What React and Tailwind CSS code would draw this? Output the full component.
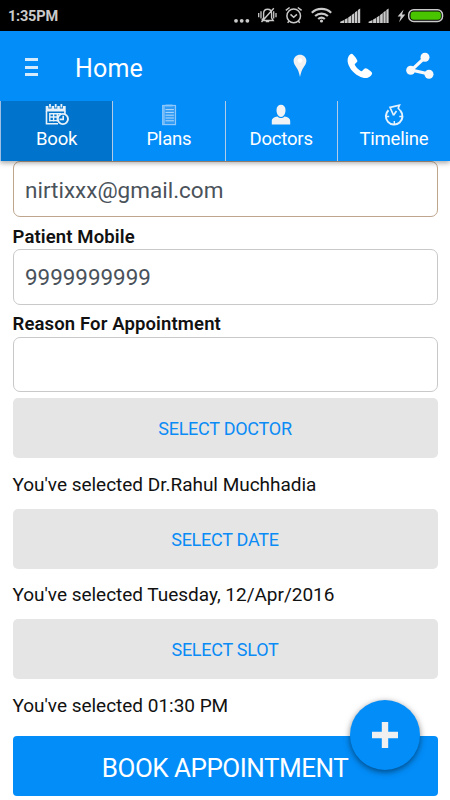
const tabs = [
  { label: "Book", icon: BookIcon },
  { label: "Plans", icon: PlansIcon },
  { label: "Doctors", icon: DoctorIcon },
  { label: "Timeline", icon: TimelineIcon },
];

function StatusIcons() {
  return (
    <svg width="225" height="31" viewBox="0 0 225 31" fill="none" stroke="#cacaca">
      {/* More */}
      <g fill="#cacaca" stroke="none">
        <circle cx="11" cy="20.8" r="1.9" />
        <circle cx="16.7" cy="20.8" r="1.9" />
        <circle cx="22.4" cy="20.8" r="1.9" />
      </g>

      {/* Muted bell */}
      <path d="M36.8 20.5h11.4l-1.6-2.6v-4.3c0-2.4-1.6-4.3-4-4.3s-4 1.9-4 4.3v4.3l-1.8 2.6M40.8 21.5h3.4M36.5 22L48.8 8.3" strokeWidth="1.4" />
      <path d="M33.7 13v4.2M36 11.3v7.2M48.7 11.3v7.2M51 13v4.2" strokeWidth="1.3" />

      {/* Alarm */}
      <circle cx="68.7" cy="15.9" r="6.8" strokeWidth="1.5" />
      <path d="M65.5 14.4l3.2 2.8 3.2-2.8M60.8 10.4l3.8-2.9M76.6 10.4l-3.8-2.9M64.3 21l-1.7 1.8M73.1 21l1.7 1.8" strokeWidth="1.5" />

      {/* Wifi */}
      <path d="M86.8 12.7c5.5-5 13.9-5 19.4 0M90.1 16c3.7-3.3 9.1-3.3 12.8 0M93.2 19c1.9-1.7 4.7-1.7 6.6 0" strokeWidth="2.2" />
      <circle cx="96.5" cy="21" r="1.6" fill="#cacaca" stroke="none" />

      {/* Signal strength */}
      <g fill="#cacaca" stroke="none">
        <path d="M115.2 23v-1.2l3.9-1.9V23zM119.7 23v-3.6l2.9-1.4v5zM123.2 23v-5.6l2.9-1.8V23zM126.7 23v-8l2.7-2v10zM130 23V12.3l2.3-1.5V23zM132.9 23V10l2.3-1.4V23z" />
        <path d="M143.6 23v-1.2l3.9-1.9V23zM148.1 23v-3.6l2.9-1.4v5zM151.6 23v-5.6l2.9-1.8V23zM155.1 23v-8l2.7-2v10zM158.4 23V12.3l2.3-1.5V23zM161.3 23V10l2.3-1.4V23z" />
        <path d="M178.6 9.4l-6 7.2h3.2l-1.7 5.6 6.2-7.6h-3.3z" />
      </g>

      {/* Battery */}
      <rect x="183.7" y="9.7" width="33.8" height="11.8" rx="5" strokeWidth="1.5" />
      <rect x="185.5" y="11.5" width="30.4" height="8.2" rx="3.2" fill="#49c500" stroke="none" />
    </svg>
  );
}

function PinIcon() {
  return (
    <svg width="14" height="24" viewBox="0 0 14 24">
      <path d="M7 .7C3.4.7.6 3.4.6 6.8c0 3.6 2.8 6 4.3 9.1.9 1.9 1.5 4.4 2.1 7.1.6-2.7 1.2-5.2 2.1-7.1 1.5-3.1 4.3-5.5 4.3-9.1C13.4 3.4 10.6.7 7 .7z" fill="#f1f1f1" />
      <circle cx="7" cy="6.5" r="2.3" fill="#fff" />
    </svg>
  );
}

function PhoneIcon() {
  return (
    <svg width="26" height="26" viewBox="0 0 26 26" fill="#fff">
      <path d="M1.2 4.2C2 2 3.5.8 4.8.8c1.2.2 5.6 5.7 5.6 7.1 0 1-1 1.7-2.3 2.8-.5.5-.5 1-.1 1.6 1.4 2.3 3.3 4.2 5.7 5.6.7.4 1.2.3 1.7-.2 1.3-1.5 2.1-2.5 3.3-2.5 1.5.1 6.3 3.4 6.4 4.7.1 1.3-1 2.7-2.5 3.9-2.6 2-6.6 1.5-10.8-.8C5.5 19.9 1.1 13.5.6 8.3c-.1-1.6.1-3 .6-4.1z" />
    </svg>
  );
}

function ShareIcon() {
  return (
    <svg width="28" height="28" viewBox="0 0 28 28" fill="#f8f8f8" stroke="#f8f8f8">
      <path d="M19 5.5L5.5 18 23 22" fill="none" strokeWidth="3.2" />
      <circle cx="19" cy="5.3" r="4.5" stroke="none" />
      <circle cx="4.7" cy="18.2" r="4.5" stroke="none" />
      <circle cx="23" cy="22.3" r="4.5" stroke="none" />
    </svg>
  );
}

function BookIcon() {
  return (
    <svg width="24" height="22" viewBox="0 0 24 22" fill="none" stroke="#e8f1f8">
      <path d="M.7 2h20v5.5h-20z" fill="#e8f1f8" stroke="none" />
      <path d="M5 .4v4M10.7.4v4M16.4.4v4" stroke="#0074cd" strokeWidth="3.2" />
      <path d="M5 0v3.6M10.7 0v3.6M16.4 0v3.6" strokeWidth="1.8" />
      <path d="M1.5 7v12.8h11.5M19.9 7v3" strokeWidth="1.6" />
      <path d="M4.3 9.7h12M4.3 13h8.5M4.3 16.6h8.5M4.8 9v8.4M8.6 9v8.4M12.3 9v8.4" strokeWidth="1.4" />
      <circle cx="17.9" cy="15" r="5.1" fill="#0074cd" strokeWidth="1.9" />
      <path d="M18.2 11.7v3.7h-3.7" strokeWidth="1.6" />
    </svg>
  );
}

function PlansIcon() {
  return (
    <svg width="16" height="22" viewBox="0 0 16 22" fill="none" stroke="#8fc8f8">
      <rect x="1.7" y="1.5" width="12.8" height="19.1" strokeWidth="1.2" fill="#2f9cf7" />
      <path d="M3 2v18" strokeWidth="1.2" />
      <path d="M4.5 1.5h7" strokeWidth="1.8" />
      <path d="M4.5 5.6h8.4M4.5 8.4h8.4M4.5 11.2h8.4M4.5 14h8.4M4.5 16.8h8.4" stroke="#b5dafa" strokeWidth="1" />
    </svg>
  );
}

function DoctorIcon() {
  return (
    <svg width="20" height="22" viewBox="0 0 20 22" fill="#f0f2f4">
      <path d="M.8 20.5v-3.2c0-2.8 2.2-4.1 5.8-4.7 1.8 2 5 2 6.8 0 3.6.6 5.8 1.9 5.8 4.7v3.2z" />
      <path d="M10 .8c2.7 0 4.5 2 4.5 5.2 0 3.8-2 7-4.5 7s-4.5-3.2-4.5-7C5.5 2.8 7.3.8 10 .8z" />
    </svg>
  );
}

function TimelineIcon() {
  return (
    <svg width="20" height="22" viewBox="0 0 20 22" fill="none" stroke="#e6f2fc">
      <path d="M4.5 6.2A8.3 8.3 0 1 0 16.5 6.9" strokeWidth="2" />
      <path d="M9.6 11.3L6 3.4 15.5 1.2 14.2 4.2 16.6 7" strokeWidth="1.6" />
      <path d="M9.5 11.3l3-4.3" strokeWidth="1.7" />
      <path d="M2.5 12.5h2.7M15.3 12.5H18M10.3 17v3" strokeWidth="1.4" />
    </svg>
  );
}

function Field({ label, value }) {
  return (
    <div>
      <div className="flex h-8 items-center pt-[9px] text-[18.5px] font-semibold tracking-[0.13px] text-[#111]">{label}</div>
      <div className="flex h-[55.5px] items-center rounded-[7px] border border-[#c9c9c9] px-[11.5px] pt-[2px] text-[22.4px] text-[#4a525b]">
        {value}
      </div>
    </div>
  );
}

function Picker({ action, selected }) {
  return (
    <div className="h-[110.7px]">
      <div className="flex h-[60px] items-center justify-center rounded-[5px] bg-[#e5e5e5] pt-px text-[18px] tracking-[-0.25px] text-[#0a8bf5]">
        {action}
      </div>
      <div className="flex h-[50px] items-center pt-[4px] text-[19px] tracking-[-0.02px] text-[#111]">{selected}</div>
    </div>
  );
}

export default function App() {
  return (
    <div className="flex h-[800px] w-[450px] flex-col overflow-hidden bg-white font-[Roboto,sans-serif]">
      {/* Status bar */}
      <div className="flex h-[31px] shrink-0 items-center justify-between bg-black">
        <span className="pl-2 pt-0.5 text-[14.5px] font-bold tracking-[-0.2px] text-[#cacaca]">1:35PM</span>
        <StatusIcons />
      </div>

      <header className="relative z-10 shrink-0 bg-[#038df9] text-white shadow-[0_2px_5px_rgba(0,0,0,0.35)]">
        {/* App bar */}
        <div className="flex h-[70px] items-center pl-[25px]">
          <div className="mt-[2px] flex w-[13px] flex-col gap-[4.5px]">
            <span className="h-[3px] bg-[#d5ebfc]" />
            <span className="h-[3px] bg-[#d5ebfc]" />
            <span className="h-[3px] bg-[#d5ebfc]" />
          </div>
          <h1 className="w-[255px] pl-[37px] pt-[4px] text-[25px] leading-none tracking-[0.2px]">Home</h1>
          <PinIcon />
          <div className="ml-[40px]"><PhoneIcon /></div>
          <div className="ml-[33px]"><ShareIcon /></div>
        </div>

        {/* Tabs */}
        <nav className="grid h-[60px] grid-cols-4 border-l border-[#9dbfe6]">
          {tabs.map(({ label, icon: Icon }, i) => (
            <div
              key={label}
              className={`flex flex-col items-center pt-[3px] ${i === 0 ? "bg-[#0074cd]" : ""} ${i < 3 ? "border-r border-[#b4cbe8]" : ""}`}
            >
              <Icon />
              <span className="mt-[1px] text-[18.5px] leading-[24px] tracking-[-0.2px]">{label}</span>
            </div>
          ))}
        </nav>
      </header>

      {/* Booking form */}
      <main className="relative flex-1 px-[12.5px]">
        <div className="flex h-[56px] items-center rounded-[7px] border border-[#bfa58d] px-[11.5px] pt-[4px] text-[22.5px] text-[#4a525b]">
          nirtixxx@gmail.com
        </div>
        <Field label="Patient Mobile" value="9999999999" />
        <Field label="Reason For Appointment" value="" />

        <div className="mt-[6px]">
          <Picker action="SELECT DOCTOR" selected="You've selected Dr.Rahul Muchhadia" />
          <Picker action="SELECT DATE" selected="You've selected Tuesday, 12/Apr/2016" />
          <Picker action="SELECT SLOT" selected="You've selected 01:30 PM" />
        </div>

        <div className="mt-[6px] flex h-[60px] items-center justify-center rounded-[4px] bg-[#038df9] pt-[4px] text-[26px] tracking-[-0.5px] text-white">
          BOOK APPOINTMENT
        </div>

        {/* Floating add button */}
        <div className="absolute right-[30px] bottom-[30px] flex size-[70px] items-center justify-center rounded-full bg-[#038df9] shadow-[0_2px_6px_rgba(0,0,0,0.5)]">
          <svg width="26" height="26" viewBox="0 0 26 26">
            <path d="M13 0v26M0 13h26" stroke="#f0f0f0" strokeWidth="6.4" />
          </svg>
        </div>
      </main>
    </div>
  );
}
